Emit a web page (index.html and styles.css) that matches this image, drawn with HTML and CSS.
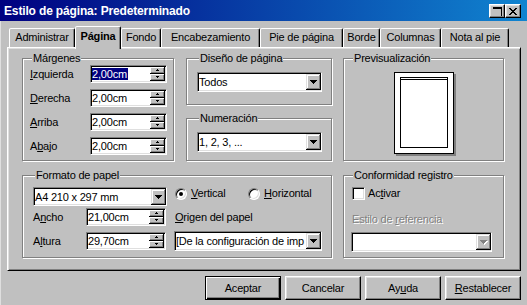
FILE: index.html
```html
<!DOCTYPE html>
<html lang="es">
<head>
<meta charset="utf-8">
<title>Estilo de página: Predeterminado</title>
<link rel="stylesheet" href="styles.css">
</head>
<body>
<svg class="defs" width="0" height="0" aria-hidden="true">
  <defs>
    <symbol id="spin" viewBox="0 0 15 14">
      <rect width="15" height="14" fill="#c0c0c0"/>
      <rect x="0" y="0" width="14" height="1" fill="#fff"/>
      <rect x="0" y="0" width="1" height="6" fill="#fff"/>
      <rect x="0" y="6" width="15" height="1" fill="#000"/>
      <rect x="14" y="0" width="1" height="7" fill="#000"/>
      <rect x="1" y="5" width="13" height="1" fill="#808080"/>
      <rect x="13" y="1" width="1" height="5" fill="#808080"/>
      <rect x="7" y="2" width="1" height="1" fill="#000"/>
      <rect x="6" y="3" width="3" height="1" fill="#000"/>
      <rect x="0" y="7" width="14" height="1" fill="#fff"/>
      <rect x="0" y="7" width="1" height="6" fill="#fff"/>
      <rect x="0" y="13" width="15" height="1" fill="#000"/>
      <rect x="14" y="7" width="1" height="7" fill="#000"/>
      <rect x="1" y="12" width="13" height="1" fill="#808080"/>
      <rect x="13" y="8" width="1" height="5" fill="#808080"/>
      <rect x="6" y="9" width="3" height="1" fill="#000"/>
      <rect x="7" y="10" width="1" height="1" fill="#000"/>
    </symbol>
    <symbol id="drop" viewBox="0 0 15 16">
      <rect width="15" height="16" fill="#c0c0c0"/>
      <rect x="0" y="0" width="14" height="1" fill="#dfdfdf"/>
      <rect x="0" y="0" width="1" height="15" fill="#dfdfdf"/>
      <rect x="1" y="1" width="12" height="1" fill="#fff"/>
      <rect x="1" y="1" width="1" height="13" fill="#fff"/>
      <rect x="0" y="15" width="15" height="1" fill="#000"/>
      <rect x="14" y="0" width="1" height="16" fill="#000"/>
      <rect x="1" y="14" width="13" height="1" fill="#808080"/>
      <rect x="13" y="1" width="1" height="14" fill="#808080"/>
      <rect x="4" y="6" width="7" height="1" fill="#000"/>
      <rect x="5" y="7" width="5" height="1" fill="#000"/>
      <rect x="6" y="8" width="3" height="1" fill="#000"/>
      <rect x="7" y="9" width="1" height="1" fill="#000"/>
    </symbol>
    <symbol id="drop-off" viewBox="0 0 15 16">
      <rect width="15" height="16" fill="#c0c0c0"/>
      <rect x="0" y="0" width="14" height="1" fill="#dfdfdf"/>
      <rect x="0" y="0" width="1" height="15" fill="#dfdfdf"/>
      <rect x="1" y="1" width="12" height="1" fill="#fff"/>
      <rect x="1" y="1" width="1" height="13" fill="#fff"/>
      <rect x="0" y="15" width="15" height="1" fill="#000"/>
      <rect x="14" y="0" width="1" height="16" fill="#000"/>
      <rect x="1" y="14" width="13" height="1" fill="#808080"/>
      <rect x="13" y="1" width="1" height="14" fill="#808080"/>
      <rect x="5" y="7" width="7" height="1" fill="#fff"/>
      <rect x="6" y="8" width="5" height="1" fill="#fff"/>
      <rect x="7" y="9" width="3" height="1" fill="#fff"/>
      <rect x="8" y="10" width="1" height="1" fill="#fff"/>
      <rect x="4" y="6" width="7" height="1" fill="#808080"/>
      <rect x="5" y="7" width="5" height="1" fill="#808080"/>
      <rect x="6" y="8" width="3" height="1" fill="#808080"/>
      <rect x="7" y="9" width="1" height="1" fill="#808080"/>
    </symbol>
  </defs>
</svg>

<div class="window">
  <div class="titlebar">
    <span class="title">Estilo de página: Predeterminado</span>
    <div class="caption-btns">
      <span class="cap-btn">
        <svg width="9" height="9" viewBox="0 0 9 9" shape-rendering="crispEdges">
          <rect x="0" y="0" width="9" height="2" fill="#000"/>
          <rect x="8" y="0" width="1" height="9" fill="#000"/>
        </svg>
      </span>
      <span class="cap-btn">
        <svg width="8" height="7" viewBox="0 0 8 7" shape-rendering="crispEdges">
          <rect x="0" y="0" width="2" height="1" fill="#000"/><rect x="6" y="0" width="2" height="1" fill="#000"/>
          <rect x="1" y="1" width="2" height="1" fill="#000"/><rect x="5" y="1" width="2" height="1" fill="#000"/>
          <rect x="2" y="2" width="4" height="1" fill="#000"/>
          <rect x="3" y="3" width="2" height="1" fill="#000"/>
          <rect x="2" y="4" width="4" height="1" fill="#000"/>
          <rect x="1" y="5" width="2" height="1" fill="#000"/><rect x="5" y="5" width="2" height="1" fill="#000"/>
          <rect x="0" y="6" width="2" height="1" fill="#000"/><rect x="6" y="6" width="2" height="1" fill="#000"/>
        </svg>
      </span>
    </div>
  </div>

  <div class="client">
    <div class="tabs">
      <div class="tab t1">Administrar</div>
      <div class="tab t2 active">Página</div>
      <div class="tab t3">Fondo</div>
      <div class="tab t4">Encabezamiento</div>
      <div class="tab t5">Pie de página</div>
      <div class="tab t6">Borde</div>
      <div class="tab t7">Columnas</div>
      <div class="tab t8">Nota al pie</div>
    </div>

    <div class="panel">
      <div class="grid">
        <div class="group g-margins">
          <span class="legend">Márgenes</span>
          <div class="rows">
            <div class="row">
              <span class="lbl lbl-m"><u>I</u>zquierda</span>
              <div class="field spin"><span class="val"><span class="sel">2,00cm</span></span><svg class="spin-btns" width="15" height="14"><use href="#spin"/></svg></div>
            </div>
            <div class="row">
              <span class="lbl lbl-m"><u>D</u>erecha</span>
              <div class="field spin"><span class="val">2,00cm</span><svg class="spin-btns" width="15" height="14"><use href="#spin"/></svg></div>
            </div>
            <div class="row">
              <span class="lbl lbl-m"><u>A</u>rriba</span>
              <div class="field spin"><span class="val">2,00cm</span><svg class="spin-btns" width="15" height="14"><use href="#spin"/></svg></div>
            </div>
            <div class="row">
              <span class="lbl lbl-m">A<u>b</u>ajo</span>
              <div class="field spin"><span class="val">2,00cm</span><svg class="spin-btns" width="15" height="14"><use href="#spin"/></svg></div>
            </div>
          </div>
        </div>

        <div class="stack">
          <div class="group g-design">
            <span class="legend">Diseño de página</span>
            <div class="field combo c-design"><span class="val">Todos</span><svg class="drop-btn" width="15" height="16"><use href="#drop"/></svg></div>
          </div>
          <div class="group g-num">
            <span class="legend">Numeración</span>
            <div class="field combo c-design"><span class="val">1, 2, 3, ...</span><svg class="drop-btn" width="15" height="16"><use href="#drop"/></svg></div>
          </div>
        </div>

        <div class="group g-preview">
          <span class="legend">Previsualización</span>
          <div class="page">
            <div class="page-inner"><div class="page-head"></div></div>
          </div>
        </div>

        <div class="group g-format">
          <span class="legend">Formato de papel</span>
          <div class="fmt">
            <div class="fmt-left">
              <div class="field combo c-a4"><span class="val">A4 210 x 297 mm</span><svg class="drop-btn" width="15" height="16"><use href="#drop"/></svg></div>
              <div class="row r-ancho">
                <span class="lbl lbl-f">A<u>n</u>cho</span>
                <div class="field spin s-fmt"><span class="val">21,00cm</span><svg class="spin-btns" width="15" height="14"><use href="#spin"/></svg></div>
              </div>
              <div class="row r-altura">
                <span class="lbl lbl-f">A<u>l</u>tura</span>
                <div class="field spin s-fmt"><span class="val">29,70cm</span><svg class="spin-btns" width="15" height="14"><use href="#spin"/></svg></div>
              </div>
            </div>
            <div class="fmt-right">
              <div class="radios">
                <span class="opt o-vert"><span class="radio checked"></span><span><u>V</u>ertical</span></span>
                <span class="opt"><span class="radio"></span><span><u>H</u>orizontal</span></span>
              </div>
              <span class="lbl origin"><u>O</u>rigen del papel</span>
              <div class="field combo c-origin"><span class="val">[De la configuración de imp</span><svg class="drop-btn" width="15" height="16"><use href="#drop"/></svg></div>
            </div>
          </div>
        </div>

        <div class="group g-conform">
          <span class="legend">Conformidad registro</span>
          <div class="check-row"><span class="checkbox"></span><span>Ac<u>t</u>ivar</span></div>
          <span class="lbl disabled ref-lbl">Estilo de <u>r</u>eferencia</span>
          <div class="field combo c-ref"><span class="val"></span><svg class="drop-btn" width="15" height="16"><use href="#drop-off"/></svg></div>
        </div>
      </div>
    </div>

    <div class="actions">
      <button class="btn default">Aceptar</button>
      <button class="btn">Cancelar</button>
      <button class="btn">Ay<u>u</u>da</button>
      <button class="btn"><u>R</u>establecer</button>
    </div>
  </div>
</div>
</body>
</html>
```

FILE: styles.css
```css
* { box-sizing: border-box; }

html, body {
  margin: 0;
  padding: 0;
}

body {
  width: 527px;
  height: 305px;
  overflow: hidden;
  background: #c0c0c0;
  color: #000;
  font-family: "Liberation Sans", Arial, sans-serif;
  font-size: 11px;
  line-height: 13px;
  letter-spacing: -0.2px;
}

.defs { position: absolute; width: 0; height: 0; }

u { text-underline-offset: 1px; }

.window {
  width: 527px;
  height: 305px;
  display: flex;
  flex-direction: column;
}

/* ---------- title bar ---------- */
.titlebar {
  height: 21px;
  flex: none;
  display: flex;
  align-items: center;
  padding: 0 6px 0 4px;
  background: linear-gradient(to right, #000080, #1084d0);
}

.title {
  flex: 1;
  color: #fff;
  font-weight: bold;
  font-size: 12px;
  letter-spacing: -0.15px;
  line-height: 14px;
}

.caption-btns {
  display: flex;
  align-self: flex-start;
  margin-top: 4px;
}

.cap-btn {
  width: 16px;
  height: 14px;
  display: flex;
  align-items: center;
  justify-content: center;
  background: #c0c0c0;
  border: 1px solid;
  border-color: #fff #000 #000 #fff;
  box-shadow: inset -1px -1px #808080, inset 1px 1px #dfdfdf;
}

/* ---------- client ---------- */
.client {
  flex: 1;
  display: flex;
  flex-direction: column;
  padding: 0 6px 0 6px;
  border-left: 1px solid #dfdfdf;
}

.tabs {
  height: 26px;
  flex: none;
  display: flex;
  align-items: flex-end;
  padding-left: 2px;
  position: relative;
  z-index: 1;
}

.tab {
  height: 19px;
  background: #c0c0c0;
  border: 1px solid;
  border-bottom: none;
  border-color: #fff #000 transparent #fff;
  border-radius: 2px 2px 0 0;
  box-shadow: inset -1px 0 #808080;
  text-align: center;
  line-height: 16px;
  white-space: nowrap;
}

.tab.active {
  height: 23px;
  margin-bottom: -2px;
  font-weight: bold;
  line-height: 19px;
}

.t1 { width: 66px; }
.t2 { width: 46px; }
.t3 { width: 40px; }
.t4 { width: 99px; }
.t5 { width: 83px; }
.t6 { width: 37px; }
.t7 { width: 61px; }
.t8 { width: 68px; }

.panel {
  height: 224px;
  flex: none;
  border: 1px solid;
  border-color: #fff #000 #000 #fff;
  box-shadow: inset 1px 1px #dfdfdf, inset -1px -1px #808080;
  padding: 10px 0 0 14px;
}

.grid {
  display: grid;
  grid-template-columns: 152px 12px 146px 11px 161px;
  grid-template-rows: 103px 14px 83px;
}

/* ---------- group boxes ---------- */
.group {
  display: flex;
  flex-direction: column;
  border: 1px solid #808080;
  box-shadow: inset 1px 1px #fff, 1px 1px #fff;
  padding: 0 6px 0 7px;
}

.legend {
  align-self: flex-start;
  height: 13px;
  line-height: 13px;
  margin: -7px 0 0 2px;
  padding: 0 1px;
  background: #c0c0c0;
  white-space: nowrap;
}

.g-margins { grid-column: 1; grid-row: 1; }
.stack {
  grid-column: 3;
  grid-row: 1;
  display: flex;
  flex-direction: column;
  gap: 13px;
}
.g-design { height: 47px; padding: 0 9px 0 10px; }
.g-num { height: 43px; padding: 0 9px 0 10px; }
.g-preview { grid-column: 5; grid-row: 1; }
.g-format { grid-column: 1 / 4; grid-row: 3; padding-left: 10px; }
.g-conform { grid-column: 5; grid-row: 3; }

.rows {
  margin-top: 0;
  display: flex;
  flex-direction: column;
  gap: 6px;
}

.row {
  display: flex;
  align-items: center;
  height: 18px;
}

.lbl { white-space: nowrap; }
.lbl-m { width: 61px; }
.lbl-f { width: 53px; }

/* ---------- fields ---------- */
.field {
  display: flex;
  align-items: center;
  background: #fff;
  border: 1px solid;
  border-color: #808080 #fff #fff #808080;
  box-shadow: inset 1px 1px #000, inset -1px -1px #dfdfdf;
  padding: 1px;
  overflow: hidden;
}

.val {
  flex: 1;
  min-width: 0;
  white-space: nowrap;
  overflow: hidden;
  line-height: 12px;
}

.sel {
  background: #000080;
  color: #fff;
  padding: 0 1px 0 0;
}

.spin { width: 78px; height: 18px; }
.s-fmt { width: 80px; }
.spin-btns { flex: none; display: block; }

.combo { height: 20px; padding-right: 0; }
.drop-btn { flex: none; display: block; }

.c-design { width: 125px; margin-top: 7px; }
.c-a4 { width: 134px; height: 19px; }
.c-origin { width: 148px; margin-top: 6px; }
.c-ref { width: 141px; margin-top: 6px; }

/* ---------- preview ---------- */
.page {
  align-self: center;
  margin-top: 7px;
  width: 60px;
  height: 82px;
  background: #fff;
  border: 1px solid #000;
  box-shadow: 2px 2px 0 #808080;
  padding: 4px 5px 5px 5px;
}

.page-inner {
  width: 100%;
  height: 100%;
  border: 1px solid #000;
}

.page-head {
  height: 1px;
  margin-top: 1px;
  background: #000;
}

/* ---------- paper format ---------- */
.fmt {
  margin-top: 5px;
  display: flex;
  gap: 7px;
}

.fmt-left {
  width: 134px;
  display: flex;
  flex-direction: column;
}

.r-ancho { margin-top: 2px; }
.r-altura { margin-top: 6px; }

.fmt-right {
  display: flex;
  flex-direction: column;
}

.radios {
  display: flex;
  height: 13px;
  align-items: center;
  padding-left: 1px;
}

.opt {
  display: flex;
  align-items: center;
  gap: 4px;
}

.o-vert { width: 73px; }

.radio {
  width: 12px;
  height: 12px;
  flex: none;
  border-radius: 50%;
  background: #fff;
  border: 1px solid;
  border-color: #808080 #fff #fff #808080;
  box-shadow: inset 1px 1px #000, inset -1px -1px #dfdfdf;
  display: flex;
  align-items: center;
  justify-content: center;
}

.radio.checked::after {
  content: "";
  width: 4px;
  height: 4px;
  border-radius: 50%;
  background: #000;
}

.origin {
  margin-top: 9px;
  height: 16px;
  line-height: 16px;
  padding-left: 1px;
}

/* ---------- conformity ---------- */
.check-row {
  margin-top: 5px;
  padding-left: 1px;
  display: flex;
  align-items: center;
  gap: 3px;
  height: 13px;
}

.checkbox {
  width: 13px;
  height: 13px;
  flex: none;
  background: #fff;
  border: 1px solid;
  border-color: #808080 #fff #fff #808080;
  box-shadow: inset 1px 1px #000, inset -1px -1px #dfdfdf;
}

.ref-lbl {
  margin-top: 13px;
  padding-left: 1px;
  height: 13px;
}

.disabled {
  color: #808080;
  text-shadow: 1px 1px 0 #fff;
}

/* ---------- buttons ---------- */
.actions {
  margin-top: 5px;
  display: flex;
  justify-content: flex-end;
  gap: 4px;
}

.btn {
  width: 76px;
  height: 24px;
  padding: 0;
  font: inherit;
  letter-spacing: inherit;
  color: #000;
  background: #c0c0c0;
  border: 1px solid;
  border-color: #fff #000 #000 #fff;
  box-shadow: inset -1px -1px #808080, inset 1px 1px #dfdfdf;
}

.btn.default {
  border-color: #000;
  box-shadow: inset 1px 1px #fff, inset -1px -1px #000, inset -2px -2px #808080;
}
```
